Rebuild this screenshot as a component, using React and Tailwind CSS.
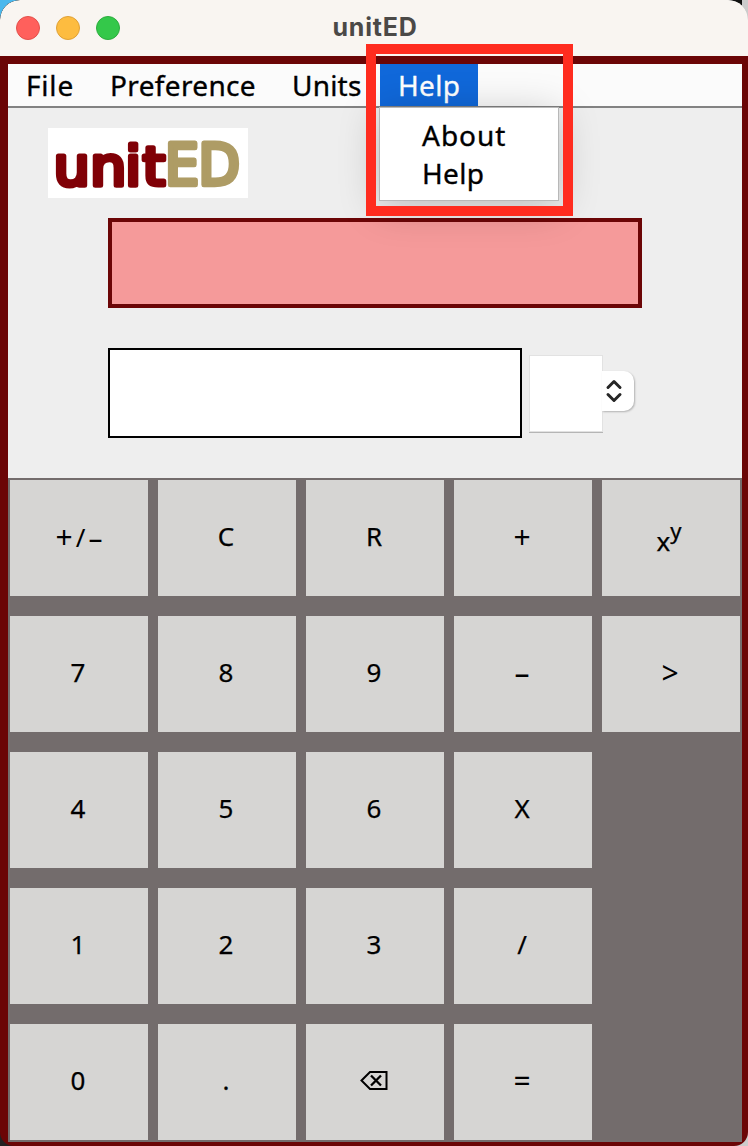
import React from 'react';

const menus = [
  { label: 'File', box: 'w-[84px]', text: 'tracking-[0.8px]' },
  { label: 'Preference', box: 'w-[182px]', text: 'tracking-[0.35px]' },
  { label: 'Units', box: 'w-[106px]', text: 'tracking-[0.2px]' },
];

const keys = [
  '+/–', 'C', 'R', '+', 'pow',
  '7', '8', '9', '–', '>',
  '4', '5', '6', 'X', null,
  '1', '2', '3', '/', null,
  '0', '.', 'del', '=', null,
];

const wideSigns = ['+', '>', '=', '–'];

function TitleBar() {
  return (
    <header className="relative flex h-14 shrink-0 items-start rounded-t-[20px] bg-[#f9f5f1] pl-4 pt-4">
      <div className="flex gap-4">
        <span className="size-6 rounded-full border border-[#e2504b] bg-[#ff605c]" />
        <span className="size-6 rounded-full border border-[#dfa036] bg-[#fdbc40]" />
        <span className="size-6 rounded-full border border-[#2dac3e] bg-[#34c84a]" />
      </div>
      <h1 className="absolute inset-x-0 top-[11px] pl-[2px] text-center font-['Inter','Liberation_Sans',sans-serif] text-[25px] font-bold leading-8 tracking-[0.8px] text-[#4b4947]">unitED</h1>
    </header>
  );
}

function HelpMenu() {
  return (
    <div className="relative w-[98px] bg-[#1068da] pl-[18px] text-white">
      <span className="tracking-[0.3px]">Help</span>
      <div className="absolute -left-px top-[43px] z-10 flex h-[94px] w-[180px] flex-col border border-[#b8b8b8] bg-white pl-[42px] pt-[8px] text-black shadow-[0_6px_40px_rgba(0,0,0,0.22)]">
        <span className="h-[38px] leading-[38px] tracking-[1px]">About</span>
        <span className="h-[38px] leading-[38px] tracking-[0.3px]">Help</span>
      </div>
      <div className="pointer-events-none absolute -left-[14px] -top-[20px] z-20 h-[172px] w-[207px] border-[10px] border-[#ff2c1f]" />
    </div>
  );
}

function Logo() {
  return (
    <svg className="block h-[70px] w-[200px] bg-white" viewBox="0 0 200 70" role="img" aria-label="unitED">
      <g fontFamily="DejaVu Sans, sans-serif" strokeLinejoin="round">
        <text transform="scale(1.07 1)" x="5.3 39.5 72.3 88.5" y="57.5" fontSize="53" fill="#800006" stroke="#800006" strokeWidth="5">unit</text>
        <text transform="scale(0.96 1)" x="122 156.8" y="57.5" fontSize="56" fill="#ae9c65" stroke="#ae9c65" strokeWidth="5">ED</text>
      </g>
    </svg>
  );
}

function KeyLabel({ name }) {
  if (name === 'pow') {
    return <span className="relative left-[-1px] top-[5px]">x<sup className="relative -top-[12px] align-baseline text-[22px] leading-none">y</sup></span>;
  }
  if (name === 'del') {
    return (
      <svg className="h-5 w-7" viewBox="0 0 28 20" fill="none" stroke="#000" strokeWidth="2">
        <path d="M1.5 10.5 10 2h16.5v17H10Z" />
        <path d="m11 5.5 10 10M21 5.5l-10 10" strokeWidth="2.3" />
      </svg>
    );
  }
  if (name === '+/–') {
    return (
      <span className="flex items-center gap-[3px] pl-[2px] pt-[2px] [-webkit-text-stroke:0px]">
        <span className="text-[30px]">+</span>
        <span>/</span>
        <span className="text-[28px]">–</span>
      </span>
    );
  }
  if (wideSigns.includes(name)) {
    return <span className="pt-[3px] text-[30px] [-webkit-text-stroke:0px]">{name}</span>;
  }
  return <span>{name}</span>;
}

export default function App() {
  return (
    <div className="h-[1146px] w-[748px] overflow-hidden bg-[linear-gradient(90deg,#4bb8ed_0_30px,#111_30px_742px,#ccc_742px)] font-['Noto_Sans','Open_Sans',sans-serif] text-black">
      <div className="flex h-full flex-col overflow-hidden rounded-t-[20px] bg-[linear-gradient(90deg,#222_0_30px,#ccc_30px)]">
        <TitleBar />
        <main className="flex grow flex-col overflow-visible rounded-b-[14px] border-b-4 border-l-8 border-r-[6px] border-t-8 border-[#6b0506] bg-[#eee]">
          <nav className="flex h-11 shrink-0 border-b-2 border-[#828282] bg-[#fbfbfb] text-[28px] leading-[42px] [-webkit-text-stroke:0.35px_currentColor]">
            {menus.map((m) => (
              <div key={m.label} className={`${m.box} shrink-0 pl-[18px] ${m.text}`}>{m.label}</div>
            ))}
            <HelpMenu />
          </nav>
          <section className="flex h-[370px] shrink-0 flex-col pl-10 pt-5">
            <Logo />
            <div className="ml-[60px] mt-5 h-[90px] w-[534px] shrink-0 border-4 border-[#6b0506] bg-[#f59a9a]" />
            <div className="ml-[60px] mt-10 flex h-[90px] items-center">
              <div className="h-full w-[414px] border-2 border-black bg-white" />
              <div className="ml-[7px] h-[77px] w-[74px] border border-[#e2e2e2] bg-white shadow-[0_1px_0_#b5b5b5]" />
              <div className="-ml-px -mt-1 flex h-10 w-8 items-center rounded-r-[10px] bg-white pl-[3px] shadow-[1px_1px_2px_rgba(0,0,0,0.25)]">
                <svg className="h-6 w-[18px]" viewBox="0 0 18 24" fill="none" stroke="#262626" strokeWidth="3" strokeLinecap="round" strokeLinejoin="round">
                  <path d="m3 8.5 6-6 6 6M3 15.5l6 6 6-6" />
                </svg>
              </div>
            </div>
          </section>
          <section className="grid grow grid-cols-[repeat(5,138px)] grid-rows-[repeat(5,116px)] gap-x-[10px] gap-y-5 bg-[#736c6c] p-[2px] text-[26px] leading-none [-webkit-text-stroke:0.25px_currentColor]">
            {keys.map((k, i) => k ? (
              <button key={i} type="button" className="flex items-center justify-center bg-[#d6d5d3] pb-[5px] pr-[2px]">
                <KeyLabel name={k} />
              </button>
            ) : <div key={i} />)}
          </section>
        </main>
      </div>
    </div>
  );
}
